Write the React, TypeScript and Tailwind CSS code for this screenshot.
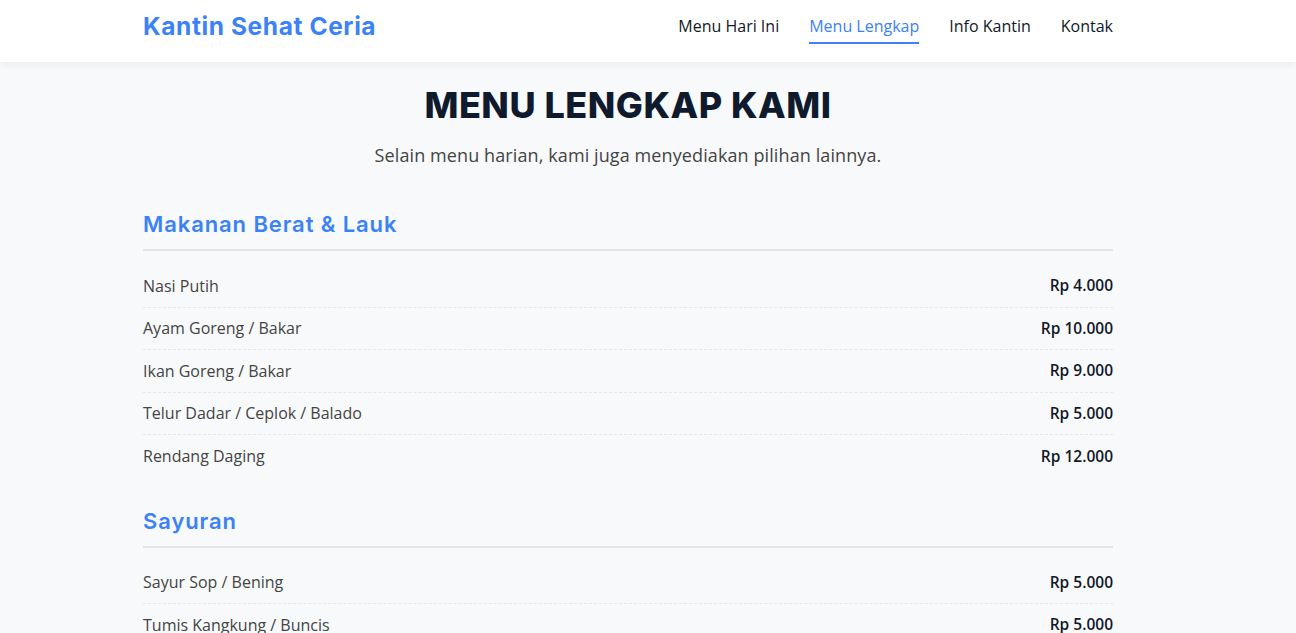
import React from "react";

const sections = [
  {
    title: "Makanan Berat & Lauk",
    items: [
      ["Nasi Putih", "Rp 4.000"],
      ["Ayam Goreng / Bakar", "Rp 10.000"],
      ["Ikan Goreng / Bakar", "Rp 9.000"],
      ["Telur Dadar / Ceplok / Balado", "Rp 5.000"],
      ["Rendang Daging", "Rp 12.000"],
    ],
  },
  {
    title: "Sayuran",
    items: [
      ["Sayur Sop / Bening", "Rp 5.000"],
      ["Tumis Kangkung / Buncis", "Rp 5.000"],
      ["Sayur Lodeh", "Rp 5.000"],
    ],
  },
];

export default function App() {
  return (
    <div className="min-h-screen bg-[#f8f9fb] font-['Open_Sans',sans-serif]">
      <header className="bg-white shadow-[0_2px_8px_rgba(0,0,0,0.06)] relative z-10 pb-[10px]">
        <div className="w-[970px] ml-[143px] h-[52px] flex items-center justify-between">
          <div className="font-['Inter',sans-serif] font-bold text-[24.5px] text-[#3b82f6] tracking-[0.6px]">
            Kantin Sehat Ceria
          </div>
          <nav className="flex items-center gap-[30px] text-[16px] font-medium text-[#111827]">
            <a className="">Menu Hari Ini</a>
            <a className="text-[#3b82f6] relative">
              Menu Lengkap
              <span className="absolute left-0 right-0 top-[28px] h-[2px] bg-[#3b82f6]"></span>
            </a>
            <a className="">Info Kantin</a>
            <a className="">Kontak</a>
          </nav>
        </div>
      </header>
      <main className="w-[970px] ml-[143px] pt-[22px]">
        <h1 className="text-center font-['Inter',sans-serif] font-extrabold text-[36px] leading-[1.2] text-[#0f1b2d] tracking-[0.5px]">
          MENU LENGKAP KAMI
        </h1>
        <p className="text-center text-[18px] text-[#444] mt-[15px] tracking-[0.1px]">
          Selain menu harian, kami juga menyediakan pilihan lainnya.
        </p>
        <div className="mt-[39px]">
          {sections.map((s) => (
            <section key={s.title} className="mb-[27px]">
              <h2 className="font-['Inter',sans-serif] font-semibold text-[22px] text-[#3b82f6] pb-[8px] border-b-2 border-[#e3e5e8] tracking-[0.9px]">
                {s.title}
              </h2>
              <ul className="mt-[14px]">
                {s.items.map(([n, p], i) => (
                  <li
                    key={n}
                    className={`flex justify-between items-center h-[42.5px] ${
                      i < s.items.length - 1 ? "border-b border-dashed border-[#e5e7eb]" : ""
                    }`}
                  >
                    <span className="text-[16px] text-[#444]">{n}</span>
                    <span className="text-[15.5px] font-semibold text-[#111827]">{p}</span>
                  </li>
                ))}
              </ul>
            </section>
          ))}
        </div>
      </main>
    </div>
  );
}
